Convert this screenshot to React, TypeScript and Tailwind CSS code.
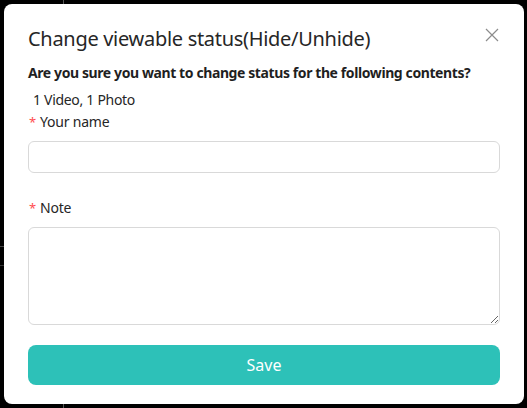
import React from "react";

export default function App() {
  return (
    <div className="relative w-[527px] h-[408px] bg-black overflow-hidden" style={{ fontFamily: '"Noto Sans", "Open Sans", sans-serif' }}>
      {/* faint background marks */}
      <div className="absolute left-[63px] top-0 w-px h-[4px] bg-[#555]" />
      <div className="absolute left-[63px] bottom-0 w-px h-[4px] bg-[#555]" />
      <div className="absolute left-0 top-[246px] w-[4px] h-px bg-[#444]" />
      <div className="absolute left-0 top-[265px] w-[4px] h-px bg-[#333]" />

      <div className="absolute left-[4px] top-[4px] w-[520px] h-[400px] bg-white rounded-[8px] px-[24px] pt-[20px] flex flex-col">
        <button className="absolute right-[21px] top-[20px] w-[22px] h-[22px] flex items-center justify-center text-[#8c8c8c]">
          <svg width="14" height="14" viewBox="0 0 14 14" fill="none" stroke="currentColor" strokeWidth="1.2">
            <path d="M1 1L13 13M13 1L1 13" />
          </svg>
        </button>
        <h2 className="text-[20px] leading-[30px] text-[#262626] font-normal tracking-[-0.3px]">Change viewable status(Hide/Unhide)</h2>
        <p className="mt-[8px] text-[14px] leading-[22px] font-bold text-[#1f1f1f] tracking-[-0.4px]">Are you sure you want to change status for the following contents?</p>
        <p className="mt-[5px] pl-[5px] text-[14px] leading-[22px] text-[#262626] tracking-[-0.3px]">1 Video, 1 Photo</p>
        <label className="text-[14px] leading-[22px] text-[#262626] flex items-center tracking-[-0.2px]">
          <span className="text-[#ff4d4f] text-[13px] mr-[4px] ml-[1px]">*</span>Your name
        </label>
        <input className="mt-[8px] w-full h-[32px] border border-[#d9d9d9] rounded-[6px] outline-none px-[11px] text-[14px]" />
        <label className="mt-[24px] text-[14px] leading-[22px] text-[#262626] flex items-center tracking-[-0.2px]">
          <span className="text-[#ff4d4f] text-[13px] mr-[4px] ml-[1px]">*</span>Note
        </label>
        <textarea className="mt-[8px] w-full h-[98px] border border-[#d9d9d9] rounded-[6px] outline-none px-[11px] py-[4px] text-[14px] resize-y" />
        <button className="mt-[20px] w-full h-[40px] rounded-[8px] bg-[#2dc1b8] text-white text-[16px]">Save</button>
      </div>
    </div>
  );
}
